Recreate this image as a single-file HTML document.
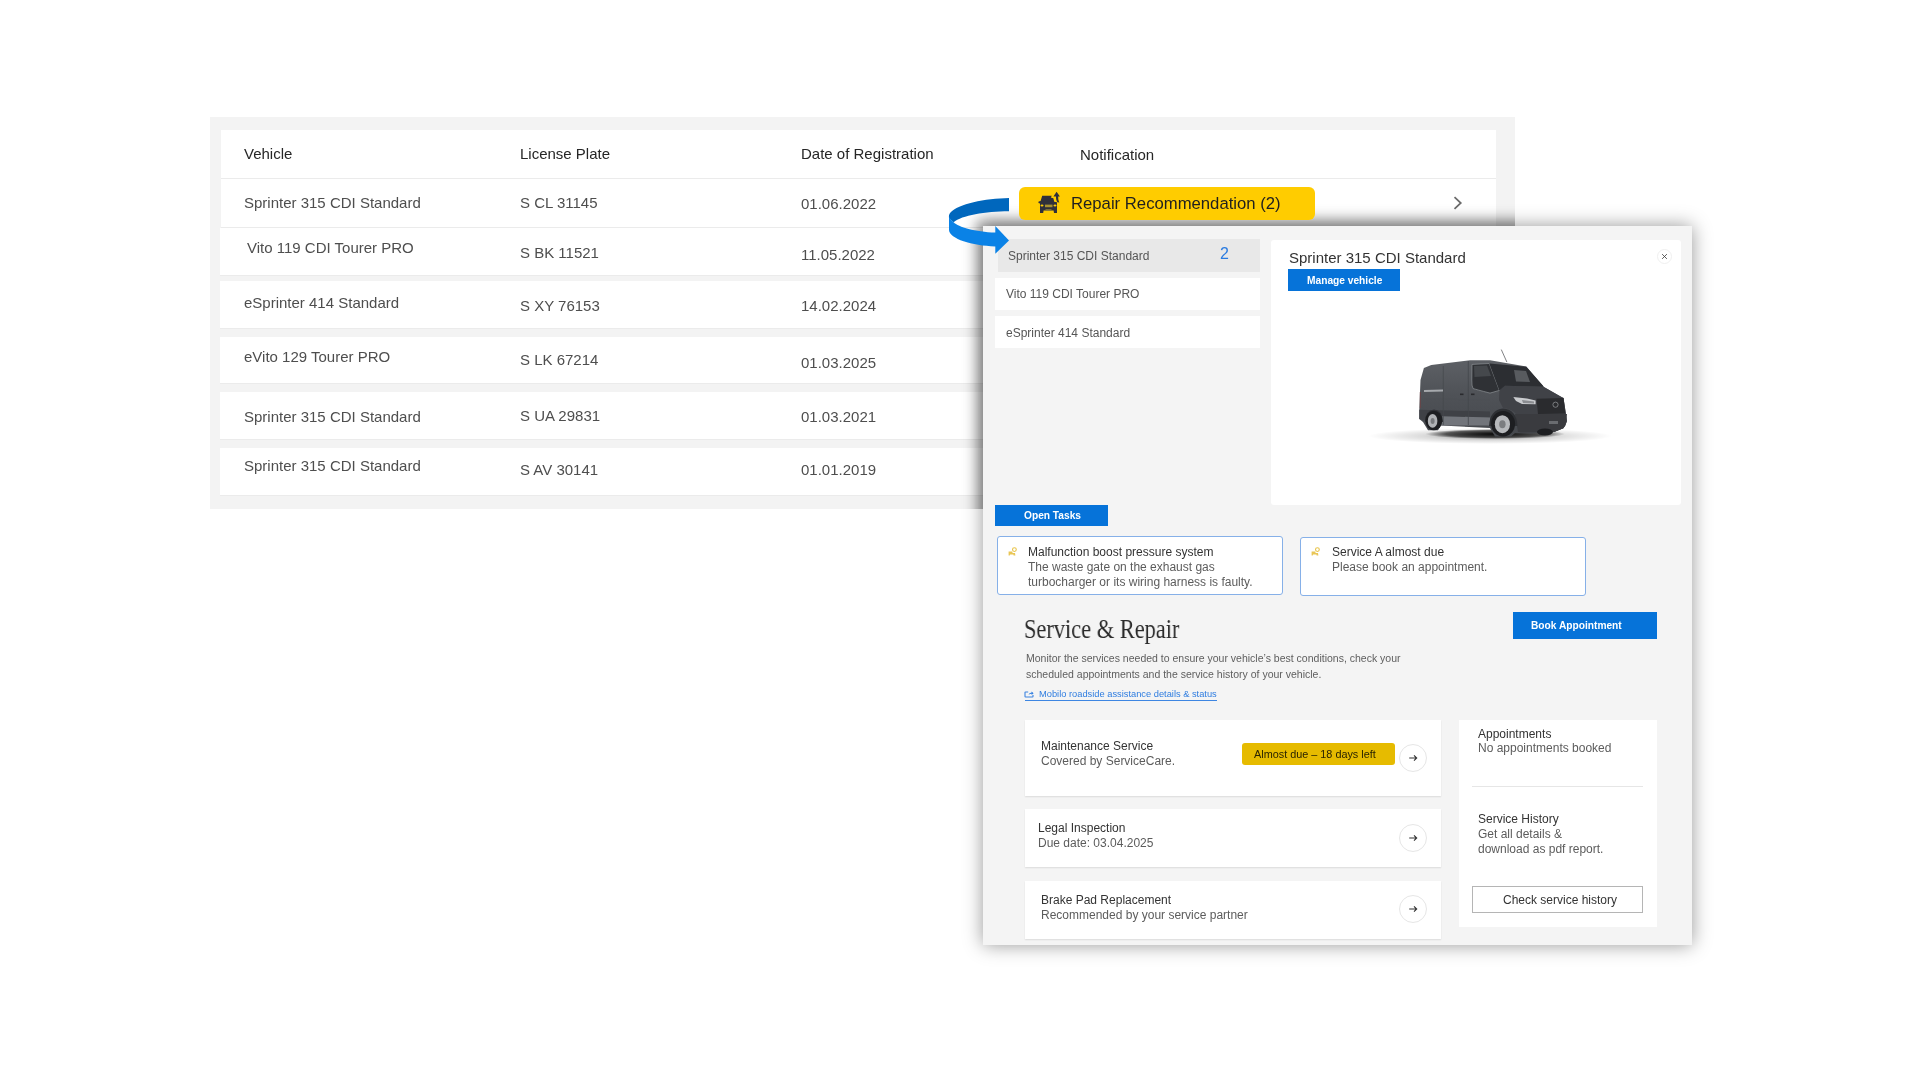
<!DOCTYPE html>
<html><head><meta charset="utf-8">
<style>
*{margin:0;padding:0;box-sizing:border-box}
html,body{width:1920px;height:1080px;overflow:hidden;background:#fff;font-family:"Liberation Sans",sans-serif}
.abs{position:absolute}
.t{position:absolute;white-space:nowrap;line-height:1;will-change:transform}
</style></head><body>
<div class="abs" style="left:210px;top:117px;width:1305px;height:392px;background:#f3f3f3"></div>
<div class="abs" style="left:221px;top:130px;width:1275px;height:48px;background:#fff;box-shadow:0 1px 0 #ebebeb"></div>
<div class="abs" style="left:221px;top:179px;width:1275px;height:48px;background:#fff;box-shadow:0 1px 0 #ebebeb"></div>
<div class="abs" style="left:220px;top:228px;width:1276px;height:47px;background:#fff;box-shadow:0 1px 0 #ebebeb"></div>
<div class="abs" style="left:220px;top:281px;width:1276px;height:47px;background:#fff;box-shadow:0 1px 0 #ebebeb"></div>
<div class="abs" style="left:220px;top:337px;width:1276px;height:46px;background:#fff;box-shadow:0 1px 0 #ebebeb"></div>
<div class="abs" style="left:220px;top:392px;width:1276px;height:47px;background:#fff;box-shadow:0 1px 0 #ebebeb"></div>
<div class="abs" style="left:220px;top:448px;width:1276px;height:47px;background:#fff;box-shadow:0 1px 0 #ebebeb"></div>
<div class="t" style="left:244px;top:146.05px;font-size:15px;color:#262626;font-weight:400;">Vehicle</div>
<div class="t" style="left:520px;top:146.05px;font-size:15px;color:#262626;font-weight:400;">License Plate</div>
<div class="t" style="left:801px;top:146.05px;font-size:15px;color:#262626;font-weight:400;">Date of Registration</div>
<div class="t" style="left:1080px;top:147.30px;font-size:15px;color:#262626;font-weight:400;">Notification</div>
<div class="t" style="left:244px;top:194.80px;font-size:15px;color:#4e4e4e;font-weight:400;">Sprinter 315 CDI Standard</div>
<div class="t" style="left:520px;top:194.80px;font-size:15px;color:#4e4e4e;font-weight:400;">S CL 31145</div>
<div class="t" style="left:801px;top:196.05px;font-size:15px;color:#4e4e4e;font-weight:400;">01.06.2022</div>
<div class="t" style="left:246.5px;top:239.80px;font-size:15px;color:#4e4e4e;font-weight:400;">Vito 119 CDI Tourer PRO</div>
<div class="t" style="left:520px;top:245.00px;font-size:15px;color:#4e4e4e;font-weight:400;">S BK 11521</div>
<div class="t" style="left:801px;top:247.40px;font-size:15px;color:#4e4e4e;font-weight:400;">11.05.2022</div>
<div class="t" style="left:244px;top:295.10px;font-size:15px;color:#4e4e4e;font-weight:400;">eSprinter 414 Standard</div>
<div class="t" style="left:520px;top:298.40px;font-size:15px;color:#4e4e4e;font-weight:400;">S XY 76153</div>
<div class="t" style="left:801px;top:297.50px;font-size:15px;color:#4e4e4e;font-weight:400;">14.02.2024</div>
<div class="t" style="left:244px;top:349.30px;font-size:15px;color:#4e4e4e;font-weight:400;">eVito 129 Tourer PRO</div>
<div class="t" style="left:520px;top:351.60px;font-size:15px;color:#4e4e4e;font-weight:400;">S LK 67214</div>
<div class="t" style="left:801px;top:354.50px;font-size:15px;color:#4e4e4e;font-weight:400;">01.03.2025</div>
<div class="t" style="left:244px;top:408.55px;font-size:15px;color:#4e4e4e;font-weight:400;">Sprinter 315 CDI Standard</div>
<div class="t" style="left:520px;top:408.00px;font-size:15px;color:#4e4e4e;font-weight:400;">S UA 29831</div>
<div class="t" style="left:801px;top:408.70px;font-size:15px;color:#4e4e4e;font-weight:400;">01.03.2021</div>
<div class="t" style="left:244px;top:458.30px;font-size:15px;color:#4e4e4e;font-weight:400;">Sprinter 315 CDI Standard</div>
<div class="t" style="left:520px;top:462.10px;font-size:15px;color:#4e4e4e;font-weight:400;">S AV 30141</div>
<div class="t" style="left:801px;top:462.30px;font-size:15px;color:#4e4e4e;font-weight:400;">01.01.2019</div>
<svg class="abs" style="left:1450px;top:194px" width="16" height="18" viewBox="0 0 16 18"><path d="M4.5 3.2 L10.8 9 L4.5 14.8" fill="none" stroke="#6a6a6a" stroke-width="1.7"/></svg>
<div class="abs" style="left:210px;top:117px;width:1305px;height:392px;overflow:hidden"><div class="abs" style="left:773px;top:109px;width:709px;height:719px;box-shadow:0 0 12px 6px rgba(0,0,0,.33)"></div></div>
<div class="abs" style="left:983px;top:226px;width:709px;height:719px;background:#f4f4f4;box-shadow:0 0 18px rgba(0,0,0,.41)"></div>
<div class="abs" style="left:1019px;top:187.2px;width:296px;height:32.8px;background:#ffcc00;border-radius:6px"></div>
<div class="t" style="left:1071.3px;top:196.26px;font-size:16.7px;color:#1f1f1f;font-weight:400;">Repair Recommendation (2)</div>
<svg class="abs" style="left:1036px;top:190px" width="26" height="26" viewBox="1036 190 26 26">
<path fill="#30303a" d="M1042.2 195.8 L1051.8 195.8 L1050.8 197.6 L1053.4 198.2 L1054.2 201.8 L1057 202.2 L1057 212.9 L1054 212.9 L1053.6 210.6 L1043.6 210.6 L1043.2 212.9 L1040 212.9 L1040 203.4 L1038.4 203 L1038.6 201.4 L1040.6 201 Z"/>
<ellipse cx="1042" cy="205.6" rx="1.5" ry="1" fill="#ffcc00"/><ellipse cx="1055" cy="205.6" rx="1.5" ry="1" fill="#ffcc00"/>
<rect x="1045" y="204.6" width="7.5" height="2.6" fill="#a89030"/>
<rect x="1045.5" y="209.2" width="6" height="1.6" fill="#8a7a3a"/>
<path fill="#30303a" d="M1056.6 191.8 L1059.9 196.6 L1058.2 196.6 C1058.2 199 1058.4 200.8 1059.3 202.4 L1057.4 202.2 C1056.4 200.8 1055.9 199 1056 196.6 L1053.4 196.6 Z"/>
</svg>
<div class="abs" style="left:997.6px;top:239.4px;width:262.2px;height:32.4px;background:#e8e8e8"></div>
<div class="t" style="left:1007.8px;top:249.84px;font-size:12px;color:#555;font-weight:400;">Sprinter 315 CDI Standard</div>
<div class="t" style="left:1219.5px;top:246.26px;font-size:16px;color:#2a7be0;font-weight:400;">2</div>
<div class="abs" style="left:995.4px;top:277.6px;width:264.4px;height:32.1px;background:#fff"></div>
<div class="t" style="left:1005.75px;top:288.24px;font-size:12px;color:#555;font-weight:400;">Vito 119 CDI Tourer PRO</div>
<div class="abs" style="left:995.4px;top:316.4px;width:264.4px;height:32.1px;background:#fff"></div>
<div class="t" style="left:1005.75px;top:327.24px;font-size:12px;color:#555;font-weight:400;">eSprinter 414 Standard</div>
<div class="abs" style="left:1271px;top:240px;width:410.4px;height:264.7px;background:#fff;border-radius:3px"></div>
<div class="t" style="left:1289px;top:249.50px;font-size:15px;color:#333;font-weight:400;">Sprinter 315 CDI Standard</div>
<div class="abs" style="left:1287.8px;top:269.2px;width:112.5px;height:21.6px;background:#0673d9"></div>
<div class="t" style="left:1306.7px;top:275.87px;font-size:10.2px;color:#fff;font-weight:700;">Manage vehicle</div>
<div class="abs" style="left:1656.5px;top:248.7px;width:15.4px;height:15.4px;border-radius:50%;border:1px solid #f0f0f0"></div>
<svg class="abs" style="left:1659px;top:251px" width="11" height="11" viewBox="0 0 11 11"><path d="M3.1 3.1 L7.9 7.9 M7.9 3.1 L3.1 7.9" stroke="#3a3a3a" stroke-width=".8"/></svg>
<svg class="abs" style="left:1360px;top:340px" width="260" height="115" viewBox="1360 340 260 115">
<defs>
<radialGradient id="sh" cx="0.5" cy="0.5" r="0.5"><stop offset="0" stop-color="#000" stop-opacity=".4"/><stop offset=".55" stop-color="#000" stop-opacity=".14"/><stop offset="1" stop-color="#000" stop-opacity="0"/></radialGradient>
<radialGradient id="sh2" cx="0.5" cy="0.5" r="0.5"><stop offset="0" stop-color="#000" stop-opacity=".95"/><stop offset=".7" stop-color="#000" stop-opacity=".6"/><stop offset="1" stop-color="#000" stop-opacity="0"/></radialGradient>
<linearGradient id="bd" x1="0" y1="0" x2="0" y2="1"><stop offset="0" stop-color="#5d6065"/><stop offset=".45" stop-color="#4f5257"/><stop offset="1" stop-color="#45484d"/></linearGradient>
</defs>
<ellipse cx="1490" cy="436" rx="122" ry="8" fill="url(#sh)"/>
<ellipse cx="1495" cy="434" rx="70" ry="5" fill="url(#sh2)"/>
<path fill="url(#bd)" d="M1423.9 368 L1431.3 364.9 L1470.2 360.3 L1490 360.3 L1526.3 366.5 L1543.9 386.9 L1561.5 396.9 L1563.5 398 L1567 421 L1565.2 425.6 L1563.3 428.3 L1554 432 L1530 433.5 L1515 433 L1511 436.5 L1495 436.5 L1490 428 L1441 425.6 L1438 430.2 L1428 430.2 L1423 421.9 L1419.3 419 L1419.3 409.8 L1420.5 380 Z"/>
<path fill="#404247" d="M1499.4 390.4 L1505 385.7 L1543.9 386.9 L1561.5 396.9 L1563.5 398 L1567 421 L1565.2 425.6 L1563.3 428.3 L1554 432 L1520 433 L1516 414 Q1512 409 1503 408 L1499 400 Z"/>
<path fill="#3f4146" d="M1419.3 409.8 L1490 411.5 L1490 417.5 L1441 416.3 L1426 421 L1419.3 419 Z"/>
<path fill="#72757b" d="M1440.6 416.3 L1490 417.5 L1490 425.6 L1441 425.6 Z"/>
<path fill="#2f3135" stroke="#8d9095" stroke-width=".7" d="M1472 364.4 L1489.3 363.5 L1499.4 390.4 L1490 393.1 Q1476 389.5 1473 388.5 Q1471.6 386 1471.8 380 Z"/>
<path fill="#45484c" d="M1474 366 L1487 365.5 L1491 376 L1474.5 377 Z"/>
<path fill="#2c2e32" d="M1489.3 363.5 L1526.3 366.8 L1543.9 386.7 L1505 385.7 L1499.4 390.4 Z"/>
<path fill="#585b5f" d="M1514 370 L1526 371 L1530 382 L1516 381.5 Z"/>
<path fill="#3a3b3f" d="M1515 414 L1567 414 L1565.2 425.6 L1563.3 428.3 L1554 432 L1518 432 Z"/>
<path fill="#2a2b2e" d="M1536.5 398.7 L1563.5 398 L1565.2 413.5 L1538 414 Z"/>
<circle cx="1555.5" cy="404.7" r="2.6" fill="none" stroke="#9a9c9f" stroke-width=".7"/>
<path fill="#c9cbce" d="M1513.3 396.9 L1527 398.5 L1535.6 400.5 L1535.6 404.3 L1522 404 L1516 401 Z"/><path fill="#8a8c90" d="M1522 400 L1534 401.5 L1534 403.5 L1523 403 Z"/>
<rect x="1549" y="421" width="9" height="3" fill="#6a6c70"/>
<line x1="1424" y1="399" x2="1490" y2="400" stroke="#4e5156" stroke-width=".6"/><line x1="1501.3" y1="349.6" x2="1506.9" y2="362.1" stroke="#4a4c50" stroke-width=".7"/>
<line x1="1443.3" y1="366" x2="1443.3" y2="425" stroke="#45484c" stroke-width=".7"/>
<line x1="1468.3" y1="361" x2="1468.3" y2="425" stroke="#44474b" stroke-width=".8"/>
<path fill="#a6a9ad" d="M1424 390 L1443 389.5 L1443 391.6 L1424 392 Z"/>
<line x1="1420.3" y1="392" x2="1420.3" y2="408" stroke="#6b4446" stroke-width="1"/>
<rect x="1460" y="393.5" width="3.5" height="1.6" fill="#2a2b2e"/><rect x="1471" y="393.5" width="3.5" height="1.6" fill="#2a2b2e"/>
<path fill="#2e3034" d="M1489 426 Q1490 409.5 1503 408.5 Q1516.5 409 1517.5 426 Z"/>
<path fill="#303236" d="M1425 422 Q1425.5 410 1434 409.5 Q1442.5 410 1443 422 Z"/>
<ellipse cx="1545" cy="432" rx="8" ry="3.5" fill="#1d1e21"/>
<ellipse cx="1433.8" cy="420.5" rx="8.5" ry="9.8" fill="#1d1e21"/><ellipse cx="1432.6" cy="420.9" rx="4.8" ry="6.8" fill="#b0b2b5"/><ellipse cx="1432.6" cy="420.9" rx="2" ry="3" fill="#77797c"/>
<ellipse cx="1503.1" cy="423.7" rx="12" ry="12.8" fill="#1d1e21"/><ellipse cx="1502.4" cy="424.2" rx="7.6" ry="9" fill="#b7b9bc"/><ellipse cx="1502.4" cy="424.2" rx="3.2" ry="4" fill="#7b7d80"/>
</svg>
<div class="abs" style="left:995.3px;top:504.8px;width:112.6px;height:21.5px;background:#0673d9"></div>
<div class="t" style="left:1023.6px;top:510.77px;font-size:10.2px;color:#fff;font-weight:700;">Open Tasks</div>
<div class="abs" style="left:997.3px;top:536.3px;width:286.2px;height:59px;background:#fff;border:1px solid #86b0e8;border-radius:3px"></div>
<svg class="abs" style="left:1008px;top:546.5px" width="10" height="10" viewBox="0 0 10 10"><circle cx="6.4" cy="2.6" r="1.9" fill="none" stroke="#e8c44a" stroke-width="1.1"/><path d="M0.6 4.6 L4.3 4.6 L4.6 6 L7 6 L7.4 8.6 L5.6 8.6 L5.4 7.6 L2 7.6 L1.8 8.6 L0.6 8.6 Z" fill="#e9c656"/></svg>
<div class="t" style="left:1027.5px;top:546.04px;font-size:12px;color:#333;font-weight:400;">Malfunction boost pressure system</div>
<div class="t" style="left:1027.5px;top:561.04px;font-size:12px;color:#5c5c5c;font-weight:400;">The waste gate on the exhaust gas</div>
<div class="t" style="left:1027.5px;top:576.24px;font-size:12px;color:#5c5c5c;font-weight:400;">turbocharger or its wiring harness is faulty.</div>
<div class="abs" style="left:1299.7px;top:536.5px;width:286.1px;height:59.2px;background:#fff;border:1px solid #86b0e8;border-radius:3px"></div>
<svg class="abs" style="left:1310.5px;top:546.5px" width="10" height="10" viewBox="0 0 10 10"><circle cx="6.4" cy="2.6" r="1.9" fill="none" stroke="#e8c44a" stroke-width="1.1"/><path d="M0.6 4.6 L4.3 4.6 L4.6 6 L7 6 L7.4 8.6 L5.6 8.6 L5.4 7.6 L2 7.6 L1.8 8.6 L0.6 8.6 Z" fill="#e9c656"/></svg>
<div class="t" style="left:1331.5px;top:546.04px;font-size:12px;color:#333;font-weight:400;">Service A almost due</div>
<div class="t" style="left:1331.5px;top:561.04px;font-size:12px;color:#5c5c5c;font-weight:400;">Please book an appointment.</div>
<div class="t" style="left:1024.2px;top:614.75px;font-size:28px;color:#2b2b2b;font-weight:400;font-family:'Liberation Serif',serif;transform:scaleX(.8);transform-origin:0 0;">Service &amp; Repair</div>
<div class="t" style="left:1025.5px;top:653.11px;font-size:10.5px;color:#5e5e5e;font-weight:400;">Monitor the services needed to ensure your vehicle’s best conditions, check your</div>
<div class="t" style="left:1025.5px;top:668.91px;font-size:10.5px;color:#5e5e5e;font-weight:400;">scheduled appointments and the service history of your vehicle.</div>
<svg class="abs" style="left:1024px;top:690px" width="11" height="9" viewBox="0 0 11 9"><path d="M4.2 2 L1.6 2 Q1 2 1 2.6 L1 6.4 Q1 7 1.6 7 L8.4 7 Q9 7 9 6.4 L9 5" fill="none" stroke="#3d84e0" stroke-width="1.1"/><path d="M4.5 5 Q5 3 7.6 2.6 L7.6 1.4 L9.6 3.2 L7.6 5 L7.6 3.8 Q5.8 3.8 4.5 5 Z" fill="#2f7de0"/></svg>
<div class="t" style="left:1038.8px;top:690.33px;font-size:9.3px;color:#2f7de0;font-weight:400;">Mobilo roadside assistance details &amp; status</div>
<div class="abs" style="left:1025px;top:700px;width:192px;height:1.2px;background:#3d86e2"></div>
<div class="abs" style="left:1512.8px;top:611.6px;width:144.4px;height:27px;background:#0673d9"></div>
<div class="t" style="left:1531px;top:620.87px;font-size:10.2px;color:#fff;font-weight:700;">Book Appointment</div>
<div class="abs" style="left:1025px;top:720px;width:415.5px;height:76px;background:#fff;box-shadow:0 1px 1.5px rgba(0,0,0,.10)"></div>
<div class="t" style="left:1040.8px;top:739.74px;font-size:12px;color:#333;font-weight:400;">Maintenance Service</div>
<div class="t" style="left:1040.8px;top:754.64px;font-size:12px;color:#5c5c5c;font-weight:400;">Covered by ServiceCare.</div>
<div class="abs" style="left:1242px;top:742.9px;width:153px;height:22.1px;background:#e6bb00;border-radius:3px"></div>
<div class="t" style="left:1253.5px;top:749.22px;font-size:10.85px;color:#2a2400;font-weight:400;">Almost due – 18 days left</div>
<div class="abs" style="left:1399px;top:743.5px;width:28px;height:28px;border-radius:50%;border:1px solid #e6e6e6;background:#fff"></div>
<svg class="abs" style="left:1407px;top:751.5px" width="12" height="12" viewBox="0 0 12 12"><path d="M2.2 6 L9.6 6 M7 3.4 L9.7 6 L7 8.6" fill="none" stroke="#333" stroke-width="1.1"/></svg>
<div class="abs" style="left:1025px;top:809.3px;width:415.5px;height:57.8px;background:#fff;box-shadow:0 1px 1.5px rgba(0,0,0,.10)"></div>
<div class="t" style="left:1037.5px;top:822.44px;font-size:12px;color:#333;font-weight:400;">Legal Inspection</div>
<div class="t" style="left:1037.5px;top:837.34px;font-size:12px;color:#5c5c5c;font-weight:400;">Due date: 03.04.2025</div>
<div class="abs" style="left:1398.5px;top:824px;width:28px;height:28px;border-radius:50%;border:1px solid #e6e6e6;background:#fff"></div>
<svg class="abs" style="left:1406.5px;top:832px" width="12" height="12" viewBox="0 0 12 12"><path d="M2.2 6 L9.6 6 M7 3.4 L9.7 6 L7 8.6" fill="none" stroke="#333" stroke-width="1.1"/></svg>
<div class="abs" style="left:1025px;top:880.8px;width:415.5px;height:57.8px;background:#fff;box-shadow:0 1px 1.5px rgba(0,0,0,.10)"></div>
<div class="t" style="left:1040.7px;top:893.74px;font-size:12px;color:#333;font-weight:400;">Brake Pad Replacement</div>
<div class="t" style="left:1040.7px;top:908.59px;font-size:12px;color:#5c5c5c;font-weight:400;">Recommended by your service partner</div>
<div class="abs" style="left:1398.5px;top:895.2px;width:28px;height:28px;border-radius:50%;border:1px solid #e6e6e6;background:#fff"></div>
<svg class="abs" style="left:1406.5px;top:903.2px" width="12" height="12" viewBox="0 0 12 12"><path d="M2.2 6 L9.6 6 M7 3.4 L9.7 6 L7 8.6" fill="none" stroke="#333" stroke-width="1.1"/></svg>
<div class="abs" style="left:1458.9px;top:719.6px;width:198.3px;height:207.6px;background:#fff"></div>
<div class="t" style="left:1477.7px;top:727.54px;font-size:12px;color:#333;font-weight:400;">Appointments</div>
<div class="t" style="left:1477.7px;top:742.44px;font-size:12px;color:#5c5c5c;font-weight:400;">No appointments booked</div>
<div class="abs" style="left:1472.4px;top:786.2px;width:170.7px;height:1px;background:#e6e6e6"></div>
<div class="t" style="left:1477.7px;top:813.14px;font-size:12px;color:#333;font-weight:400;">Service History</div>
<div class="t" style="left:1477.7px;top:828.04px;font-size:12px;color:#5c5c5c;font-weight:400;">Get all details &amp;</div>
<div class="t" style="left:1477.7px;top:843.14px;font-size:12px;color:#5c5c5c;font-weight:400;">download as pdf report.</div>
<div class="abs" style="left:1472.4px;top:886.3px;width:170.7px;height:27.1px;border:1px solid #b5b5b5;background:#fff"></div>
<div class="t" style="left:1503.2px;top:893.64px;font-size:12px;color:#333;font-weight:400;">Check service history</div>
<svg class="abs" style="left:940px;top:190px" width="80" height="70" viewBox="940 190 80 70">
<path fill="#0067bd" d="M1009 198 C985 198.5 958 204 950.5 212.5 C949 214 948.8 216 949 218 L953.6 222.2 C962 215.5 985 211.3 1009 211.3 Z"/>
<path fill="#0a82e6" d="M949 216 L949 230 C949.5 239 972 245.5 995.3 246.5 L995.3 253.7 L1009 240.5 L995.3 226 L995.3 232.6 C975 231.8 958.5 227 953.6 222.2 C951 220 949.3 218 949 216 Z"/>
</svg>
</body></html>
